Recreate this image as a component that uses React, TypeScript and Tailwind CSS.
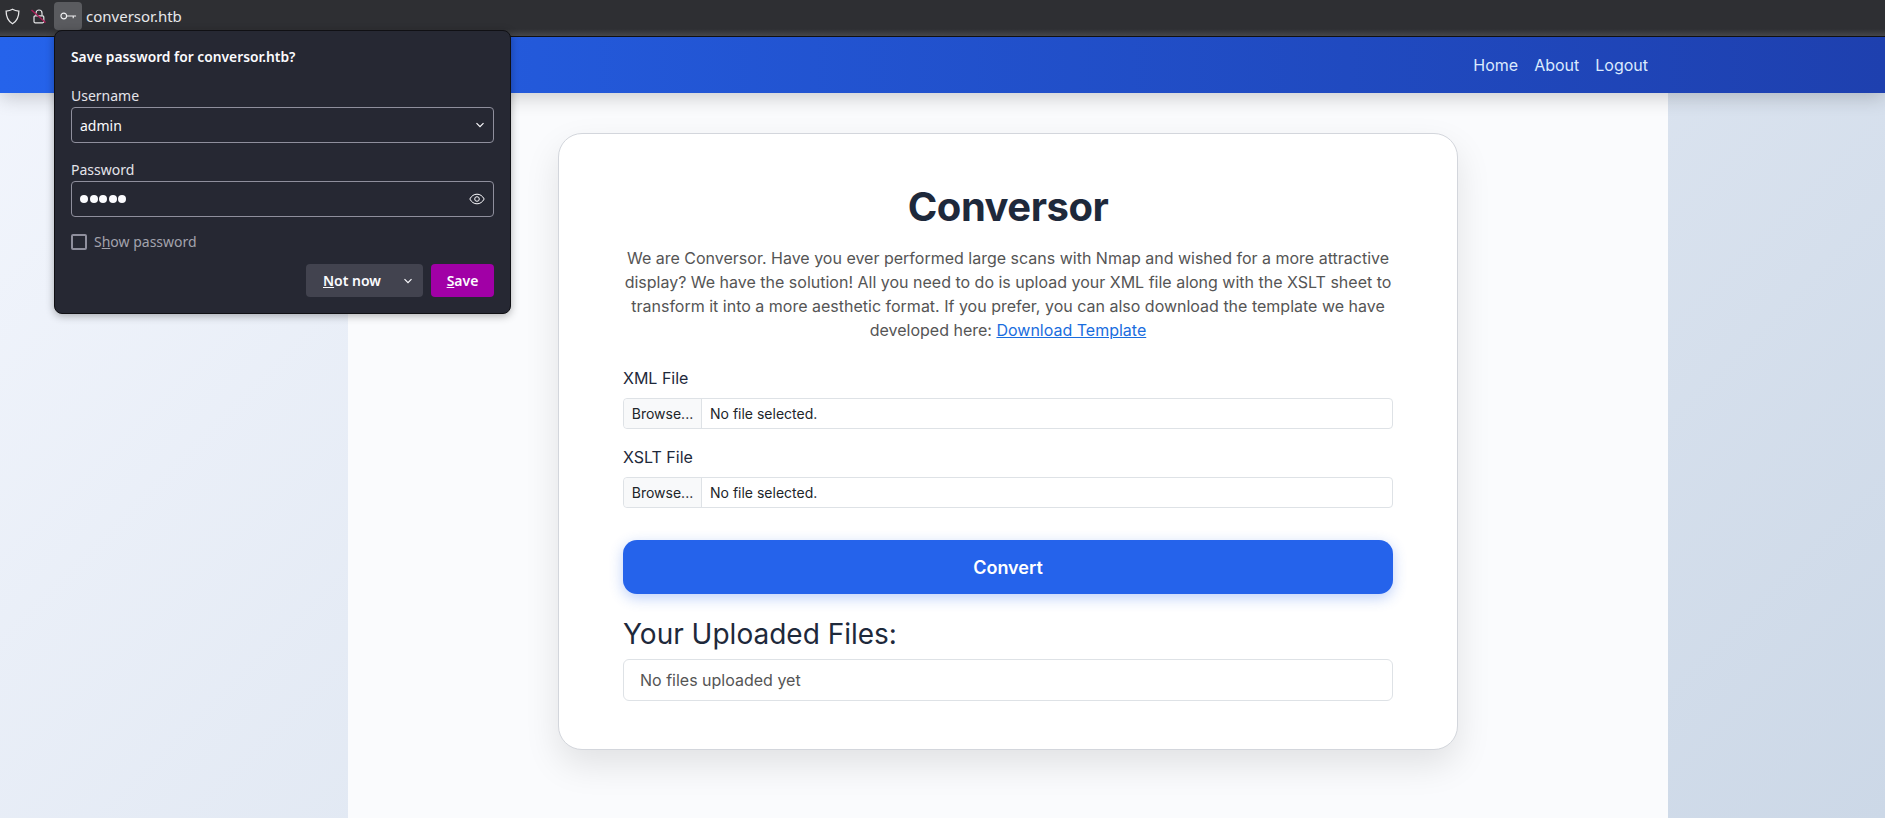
import React from "react";

const Chevron = ({ className = "" }: { className?: string }) => (
  <svg viewBox="0 0 10 6" className={className} fill="none" stroke="currentColor" strokeWidth="1.2">
    <path d="M1.5 1.2 5 4.7l3.5-3.5" />
  </svg>
);

function FileRow({ label }: { label: string }) {
  return (
    <div className="mb-[16px]">
      <div className="text-[16px] leading-[24px] text-[#1e293b] mb-[8px]">{label}</div>
      <div className="flex h-[31px] items-stretch rounded-[4px] border border-[#dee2e6] bg-white text-[14px] text-[#212529]">
        <div className="flex w-[78px] items-center justify-center rounded-l-[4px] border-r border-[#dee2e6] bg-[#f8f9fa]">
          Browse...
        </div>
        <div className="flex items-center pl-[8px]">No file selected.</div>
      </div>
    </div>
  );
}

function PasswordPopup() {
  return (
    <div className="absolute left-[54px] top-[30px] z-20 h-[284px] w-[457px] rounded-[8px] border border-[#101014] bg-[#262833] px-[16px] pt-[16px] text-[#fbfbfe] shadow-[0_2px_8px_rgba(0,0,0,0.3)] font-['Noto_Sans',sans-serif]">
      <div className="text-[13.8px] font-semibold leading-[20px]">Save password for conversor.htb?</div>
      <div className="mt-[19px] text-[14px] leading-[19px] text-[#e4e4ea]">Username</div>
      <div className="mt-[2px] flex h-[36px] items-center justify-between rounded-[4px] border border-[#8f8f9d] pl-[8px] pr-[8px] text-[14px]">
        <span>admin</span>
        <Chevron className="h-[6px] w-[10px]" />
      </div>
      <div className="mt-[17px] text-[14px] leading-[19px] text-[#e4e4ea]">Password</div>
      <div className="mt-[2px] flex h-[36px] items-center justify-between rounded-[4px] border border-[#8f8f9d] pl-[8px] pr-[8px]">
        <div className="flex gap-[1.5px]">
          {[0, 1, 2, 3, 4].map((i) => (
            <span key={i} className="h-[8px] w-[8px] rounded-full bg-[#fbfbfe]" />
          ))}
        </div>
        <svg viewBox="0 0 16 12" className="h-[12px] w-[16px]" fill="none" stroke="currentColor" strokeWidth="1">
          <path d="M.8 6C2.6 2.8 5 1.2 8 1.2S13.4 2.8 15.2 6C13.4 9.2 11 10.8 8 10.800S2.600 9.200.8 6Z" />
          <circle cx="8" cy="6" r="2.3" />
        </svg>
      </div>
      <div className="mt-[15px] flex items-center gap-[7px] text-[14px] leading-[19px] text-[#a3a3ad]">
        <span className="h-[16px] w-[16px] rounded-[2px] border-2 border-[#8f8f9d]" />
        <span>
          S<span className="underline">h</span>ow password
        </span>
      </div>
      <div className="mt-[13px] flex justify-end gap-[8px] text-[14px] font-semibold">
        <div className="flex h-[33px] w-[117px] items-center rounded-[4px] bg-[#42434f] pl-[17px]">
          <span>
            <span className="underline">N</span>ot now
          </span>
          <Chevron className="ml-auto mr-[10px] h-[6px] w-[10px]" />
        </div>
        <div className="flex h-[33px] w-[63px] items-center justify-center rounded-[4px] bg-[#a100a6]">
          <span>
            <span className="underline">S</span>ave
          </span>
        </div>
      </div>
    </div>
  );
}

function BrowserBar() {
  return (
    <div className="relative z-10 flex h-[37px] items-start bg-[linear-gradient(#2e2f33_0,#2e2f33_29px,#45464a_36px)] border-b border-[#111] font-['Noto_Sans',sans-serif]">
      <svg viewBox="0 0 16 16" className="ml-[4px] mt-[8px] h-[17px] w-[17px] text-[#e6e6e8]" fill="none" stroke="currentColor" strokeWidth="1.2">
        <path d="M8 1.2c1.8 1 3.8 1.5 6 1.700 0 5.500-1.600 9.600-6 11.900C3.600 12.500 2 8.400 2 2.900c2.200-.2 4.200-.7 6-1.700Z" />
      </svg>
      <svg viewBox="0 0 16 16" className="ml-[10px] mt-[8px] h-[17px] w-[16px] text-[#e6e6e8]" fill="none" strokeWidth="1.2">
        <path d="M5 7V4.500a3 3 0 0 1 6 0V7" stroke="currentColor" />
        <rect x="3" y="7.300" width="9.800" height="7" rx="1.200" stroke="currentColor" />
        <path d="M0.500 1.500 14.500 14" stroke="#a81e57" strokeWidth="1.500" />
      </svg>
      <div className="ml-[7px] mt-[2px] flex h-[28px] w-[28px] items-center justify-center rounded-[4px] bg-[#5a5b5f]">
        <svg viewBox="0 0 18 10" className="h-[10px] w-[17px] text-[#f0f0f2]" fill="none" stroke="currentColor" strokeWidth="1.200">
          <circle cx="4" cy="5" r="3" />
          <path d="M7 5h10M14 5v2.500" />
        </svg>
      </div>
      <div className="ml-[4px] mt-[6px] text-[15px] leading-[20px] text-[#e8e8ea]">conversor.htb</div>
    </div>
  );
}

export default function App() {
  return (
    <div className="relative h-[818px] overflow-hidden bg-[linear-gradient(135deg,#f3f6fd_0%,#ccd8e7_100%)] font-['Inter',sans-serif]">
      <BrowserBar />
      <PasswordPopup />
      <nav className="relative z-[5] flex h-[56px] items-center justify-end bg-[linear-gradient(90deg,#2563eb,#1e40af)] pr-[237px] text-[16px] text-[#dbeafe] shadow-[0_4px_20px_rgba(0,0,0,0.2)]">
        <div className="flex gap-[16px]">
          <span>Home</span>
          <span>About</span>
          <span>Logout</span>
        </div>
      </nav>
      <main className="ml-[348px] h-[725px] w-[1320px] bg-[#fafbfd] pt-[40px]">
        <div className="mx-auto h-[617px] w-[900px] rounded-[24px] border border-[#d3d6dc] bg-white px-[64px] pt-[49px] shadow-[0_15px_35px_rgba(0,0,0,0.1)]">
          <h1 className="text-center text-[40px] font-bold leading-[48px] tracking-[-0.5px] text-[#1e293b]">Conversor</h1>
          <p className="mt-[15px] text-center text-[16px] leading-[24px] text-[#555]">
            We are Conversor. Have you ever performed large scans with Nmap and wished for a more attractive display? We have the solution! All you need to do is upload your XML file along with the XSLT sheet to transform it into a more aesthetic format. If you prefer, you can also download the template we have developed here:{" "}
            <span className="text-[#1a6dde] underline">Download Template</span>
          </p>
          <div className="mt-[24px]">
            <FileRow label="XML File" />
            <FileRow label="XSLT File" />
          </div>
          <button className="mt-[32px] block h-[54px] w-full rounded-[14px] bg-[#2563eb] text-[18px] font-semibold text-white shadow-[0_4px_14px_rgba(37,99,235,0.3)]">
            Convert
          </button>
          <h2 className="mt-[23px] text-[28px] leading-[34px] text-[#1e293b]">Your Uploaded Files:</h2>
          <div className="mt-[8px] flex h-[42px] items-center rounded-[6px] border border-[#dee2e6] px-[16px] text-[16px] text-[#555]">
            No files uploaded yet
          </div>
        </div>
      </main>
    </div>
  );
}
